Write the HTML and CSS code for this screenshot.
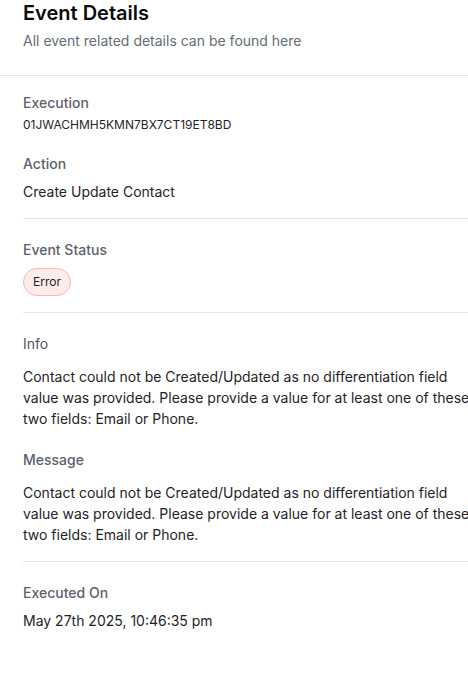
FILE: index.html
```html
<!DOCTYPE html>
<html lang="en">
<head>
<meta charset="utf-8">
<title>Event Details</title>
<link rel="stylesheet" href="styles.css">
</head>
<body>
<div class="panel">
  <header class="header">
    <h1 class="title">Event Details</h1>
    <p class="subtitle">All event related details can be found here</p>
  </header>
  <main class="body">
    <section class="group group-first">
      <div class="field">
        <div class="label">Execution</div>
        <div class="value value-mono">01JWACHMH5KMN7BX7CT19ET8BD</div>
      </div>
      <div class="field field-gap">
        <div class="label">Action</div>
        <div class="value">Create Update Contact</div>
      </div>
    </section>
    <section class="group">
      <div class="field">
        <div class="label">Event Status</div>
        <div class="value"><span class="badge">Error</span></div>
      </div>
    </section>
    <section class="group">
      <div class="field">
        <div class="label label-light">Info</div>
        <p class="para">Contact could not be Created/Updated as no differentiation field value was provided. Please provide a value for at least one of these two fields: Email or Phone.</p>
      </div>
      <div class="field field-gap">
        <div class="label">Message</div>
        <p class="para">Contact could not be Created/Updated as no differentiation field value was provided. Please provide a value for at least one of these two fields: Email or Phone.</p>
      </div>
    </section>
    <section class="group group-last">
      <div class="field">
        <div class="label">Executed On</div>
        <div class="value">May 27th 2025, 10:46:35 pm</div>
      </div>
    </section>
  </main>
</div>
</body>
</html>
```

FILE: styles.css
```css
* { box-sizing: border-box; }
html, body {
  margin: 0;
  padding: 0;
  background: #ffffff;
}
body {
  font-family: Inter, "Noto Sans", "Liberation Sans", sans-serif;
  color: #1f2328;
  overflow: hidden;
}
.panel {
  width: 480px;
}
.header {
  padding: 0 0 24px 23px;
  border-bottom: 1px solid #e4e5e8;
}
.title {
  margin: 0;
  font-size: 20px;
  line-height: 26px;
  font-weight: 600;
  color: #0b0b0c;
}
.subtitle {
  margin: 5px 0 0;
  font-size: 14px;
  line-height: 20px;
  color: #646b78;
}
.body {
  padding-left: 23px;
}
.group {
  display: flex;
  flex-direction: column;
  padding: 21px 0 16px;
  border-bottom: 1px solid #e4e5e8;
}
.group-first { padding-top: 17px; }
.group-last { border-bottom: none; }
.field {
  display: flex;
  flex-direction: column;
}
.field-gap { margin-top: 21px; }
.label {
  font-size: 14px;
  line-height: 20px;
  font-weight: 500;
  color: #5b616d;
  margin-bottom: 8px;
}
.group-first .field:first-child .label { margin-bottom: 4px; }
.label-light { font-weight: 400; color: #4f5562; }
.value {
  font-size: 14px;
  line-height: 20px;
  color: #1f2328;
}
.value-mono {
  font-size: 12px;
  line-height: 16px;
}
.badge {
  display: inline-flex;
  align-items: center;
  height: 28px;
  padding: 0 9px;
  border: 1px solid #f4b9b9;
  border-radius: 14px;
  background: #fdeceb;
  font-size: 12px;
  color: #1f2328;
}
.para {
  margin: 4px 0 0;
  font-size: 14px;
  line-height: 21px;
  color: #1f2328;
}
```
